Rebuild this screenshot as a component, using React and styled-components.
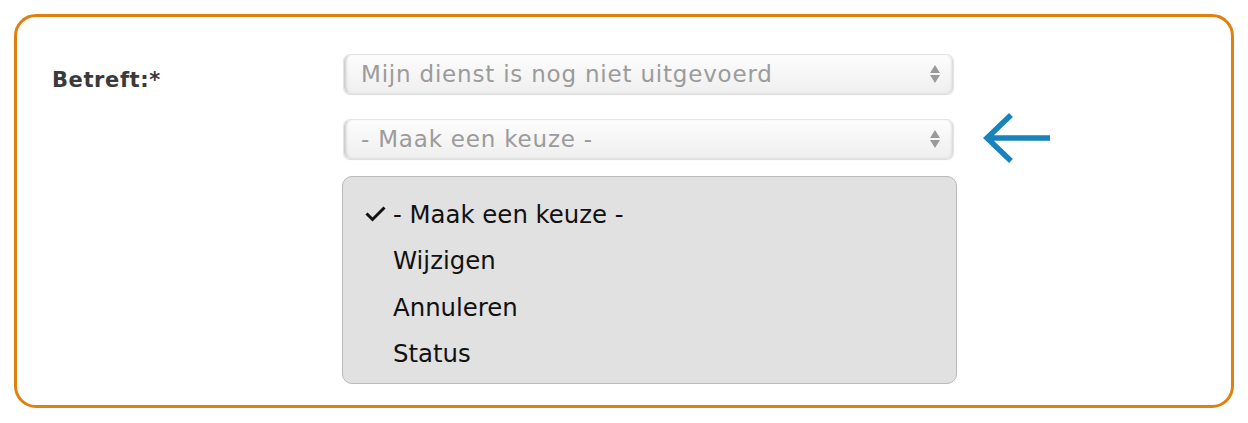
import styled, { createGlobalStyle } from 'styled-components';

const Global = createGlobalStyle`
  html, body { margin: 0; padding: 0; background: #ffffff; }
  body { font-family: "DejaVu Sans", Verdana, sans-serif; }
`;

const Frame = styled.div`
  box-sizing: border-box;
  margin: 14px 0 0 14px;
  width: 1220px;
  height: 394px;
  border: 3px solid #e2800f;
  border-radius: 22px;
  padding: 37px 0 0 35px;
  display: grid;
  grid-template-columns: 291px auto;
  align-items: start;
`;

const Label = styled.div`
  font-size: 21px;
  font-weight: bold;
  color: #3a3a3a;
  padding-top: 14px;
  letter-spacing: 0.6px;
`;

const Fields = styled.div`
  display: flex;
  flex-direction: column;
  gap: 25px;
`;

const FieldRow = styled.div`
  display: flex;
  align-items: center;
  gap: 28px;
  height: 40px;
  position: relative;
`;

const Select = styled.div`
  box-sizing: border-box;
  width: 611px;
  height: 40px;
  flex: none;
  border-radius: 7px;
  border: 1px solid #e4e4e4;
  background: linear-gradient(#fdfdfd, #efefef);
  box-shadow: inset 4px 0 3px -2px #c9c9c9, inset -3px 0 3px -2px #d0d0d0, 0 1px 1px #dcdcdc;
  display: flex;
  align-items: center;
  justify-content: space-between;
  padding: 0 12px 0 17px;
  font-size: 23px;
  letter-spacing: 0.8px;
  color: #9b9b9b;
`;

const Stepper = styled.svg`
  width: 12px;
  height: 22px;
  display: block;
`;

const Pointer = styled.svg`
  width: 70px;
  height: 56px;
  flex: none;
  display: block;
`;

const Menu = styled.div`
  position: absolute;
  top: 57px;
  left: -1px;
  box-sizing: border-box;
  width: 615px;
  height: 208px;
  background: #e1e1e1;
  border: 1px solid #b9b9b9;
  border-radius: 10px;
  padding: 14px 0 0 0;
  display: flex;
  flex-direction: column;
`;

const Option = styled.div`
  display: flex;
  align-items: center;
  height: 46.5px;
  font-size: 24.4px;
  color: #111;
  padding-left: 22px;
`;

const CheckSlot = styled.span`
  width: 28px;
  display: flex;
  align-items: center;
`;

const CheckMark = styled.svg`
  width: 22px;
  height: 16px;
  display: block;
`;

function Arrows() {
  return (
    <Stepper viewBox="0 0 12 22">
      <path d="M6 2 L11 10 L1 10 Z" fill="#9a9a9a" />
      <path d="M6 20 L11 12 L1 12 Z" fill="#9a9a9a" />
    </Stepper>
  );
}

const options = ['- Maak een keuze -', 'Wijzigen', 'Annuleren', 'Status'];

export default function App() {
  return (
    <>
      <Global />
      <Frame>
        <Label>Betreft:*</Label>
        <Fields>
          <FieldRow>
            <Select>
              <span>Mijn dienst is nog niet uitgevoerd</span>
              <Arrows />
            </Select>
          </FieldRow>
          <FieldRow>
            <Select>
              <span>- Maak een keuze -</span>
              <Arrows />
            </Select>
            <Pointer viewBox="0 0 70 56">
              <path d="M68 27 L5 27 M29 4 L5 27 L29 50" fill="none" stroke="#1783bd" strokeWidth="5.5" />
            </Pointer>
            <Menu>
              {options.map((o, i) => (
                <Option key={o}>
                  <CheckSlot>
                    {i === 0 && (
                      <CheckMark viewBox="0 0 22 16">
                        <path d="M1.5 7.5 L7.5 13.5 L19.5 1.5" fill="none" stroke="#111" strokeWidth="3" />
                      </CheckMark>
                    )}
                  </CheckSlot>
                  {o}
                </Option>
              ))}
            </Menu>
          </FieldRow>
        </Fields>
      </Frame>
    </>
  );
}
